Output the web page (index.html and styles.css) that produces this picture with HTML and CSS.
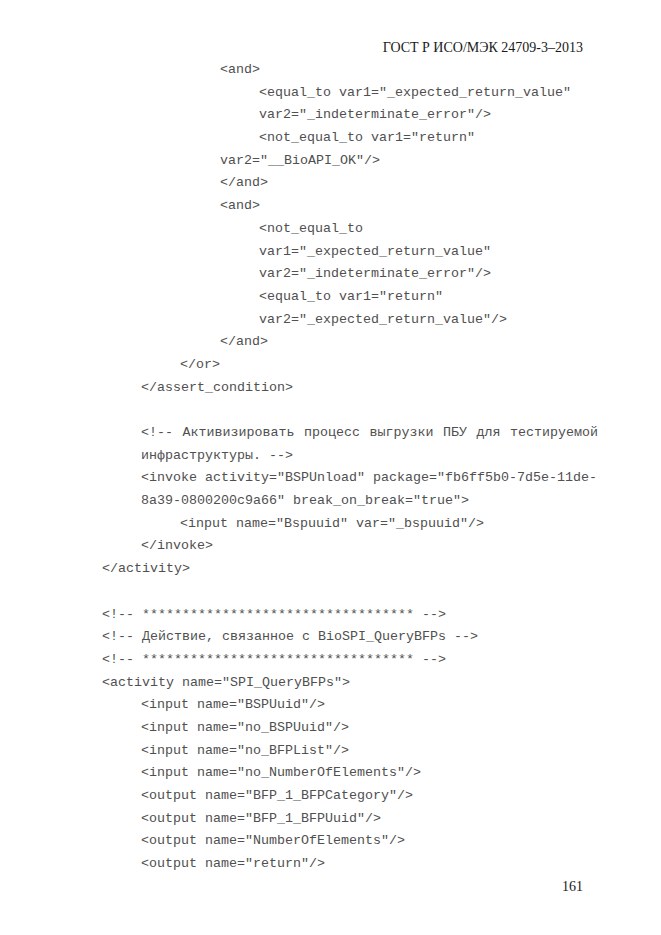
FILE: index.html
```html
<!DOCTYPE html>
<html lang="ru">
<head>
<meta charset="utf-8">
<link rel="stylesheet" href="styles.css">
</head>
<body>
<div class="page">
  <div class="header">ГОСТ Р ИСО/МЭК 24709-3–2013</div>
  <div class="code">
    <div class="l3">&lt;and&gt;</div>
    <div class="l4">&lt;equal_to var1="_expected_return_value"</div>
    <div class="l4">var2="_indeterminate_error"/&gt;</div>
    <div class="l4">&lt;not_equal_to var1="return"</div>
    <div class="l3">var2="__BioAPI_OK"/&gt;</div>
    <div class="l3">&lt;/and&gt;</div>
    <div class="l3">&lt;and&gt;</div>
    <div class="l4">&lt;not_equal_to</div>
    <div class="l4">var1="_expected_return_value"</div>
    <div class="l4">var2="_indeterminate_error"/&gt;</div>
    <div class="l4">&lt;equal_to var1="return"</div>
    <div class="l4">var2="_expected_return_value"/&gt;</div>
    <div class="l3">&lt;/and&gt;</div>
    <div class="l2">&lt;/or&gt;</div>
    <div class="l1">&lt;/assert_condition&gt;</div>
    <div class="blank"></div>
    <div class="l1"><span class="just">&lt;!-- Активизировать процесс выгрузки ПБУ для тестируемой</span></div>
    <div class="l1">инфраструктуры. --&gt;</div>
    <div class="l1">&lt;invoke activity="BSPUnload" package="fb6ff5b0-7d5e-11de-</div>
    <div class="l1">8a39-0800200c9a66" break_on_break="true"&gt;</div>
    <div class="l2">&lt;input name="Bspuuid" var="_bspuuid"/&gt;</div>
    <div class="l1">&lt;/invoke&gt;</div>
    <div class="l0">&lt;/activity&gt;</div>
    <div class="blank"></div>
    <div class="l0">&lt;!-- ********************************** --&gt;</div>
    <div class="l0">&lt;!-- Действие, связанное с BioSPI_QueryBFPs --&gt;</div>
    <div class="l0">&lt;!-- ********************************** --&gt;</div>
    <div class="l0">&lt;activity name="SPI_QueryBFPs"&gt;</div>
    <div class="l1">&lt;input name="BSPUuid"/&gt;</div>
    <div class="l1">&lt;input name="no_BSPUuid"/&gt;</div>
    <div class="l1">&lt;input name="no_BFPList"/&gt;</div>
    <div class="l1">&lt;input name="no_NumberOfElements"/&gt;</div>
    <div class="l1">&lt;output name="BFP_1_BFPCategory"/&gt;</div>
    <div class="l1">&lt;output name="BFP_1_BFPUuid"/&gt;</div>
    <div class="l1">&lt;output name="NumberOfElements"/&gt;</div>
    <div class="l1">&lt;output name="return"/&gt;</div>
  </div>
  <div class="pagenum">161</div>
</div>
</body>
</html>
```

FILE: styles.css
```css
html, body {
  margin: 0;
  padding: 0;
  background: #ffffff;
}
.page {
  width: 661px;
  height: 935px;
  box-sizing: border-box;
  padding-top: 39px;
}
.header {
  font-family: "Liberation Serif", "Times New Roman", serif;
  font-size: 14px;
  line-height: 18px;
  color: #1a1a1a;
  text-align: right;
  padding-right: 78px;
}
.code {
  margin-top: 2px;
  margin-left: 102px;
  font-family: "Liberation Mono", "Courier New", monospace;
  font-size: 13.33px;
  line-height: 22.7px;
  color: #505050;
}
.code > div {
  height: 22.7px;
  white-space: pre;
}
.l0 { padding-left: 0; }
.l1 { padding-left: 39px; }
.l2 { padding-left: 78px; }
.l3 { padding-left: 118px; }
.l4 { padding-left: 157px; }
.code > div.l1 .just {
  display: inline-block;
  width: 457px;
  white-space: normal;
  text-align: justify;
  text-align-last: justify;
}
.pagenum {
  font-family: "Liberation Serif", "Times New Roman", serif;
  font-size: 14px;
  line-height: 18px;
  color: #1a1a1a;
  text-align: right;
  padding-right: 78px;
  margin-top: 2px;
}
```
